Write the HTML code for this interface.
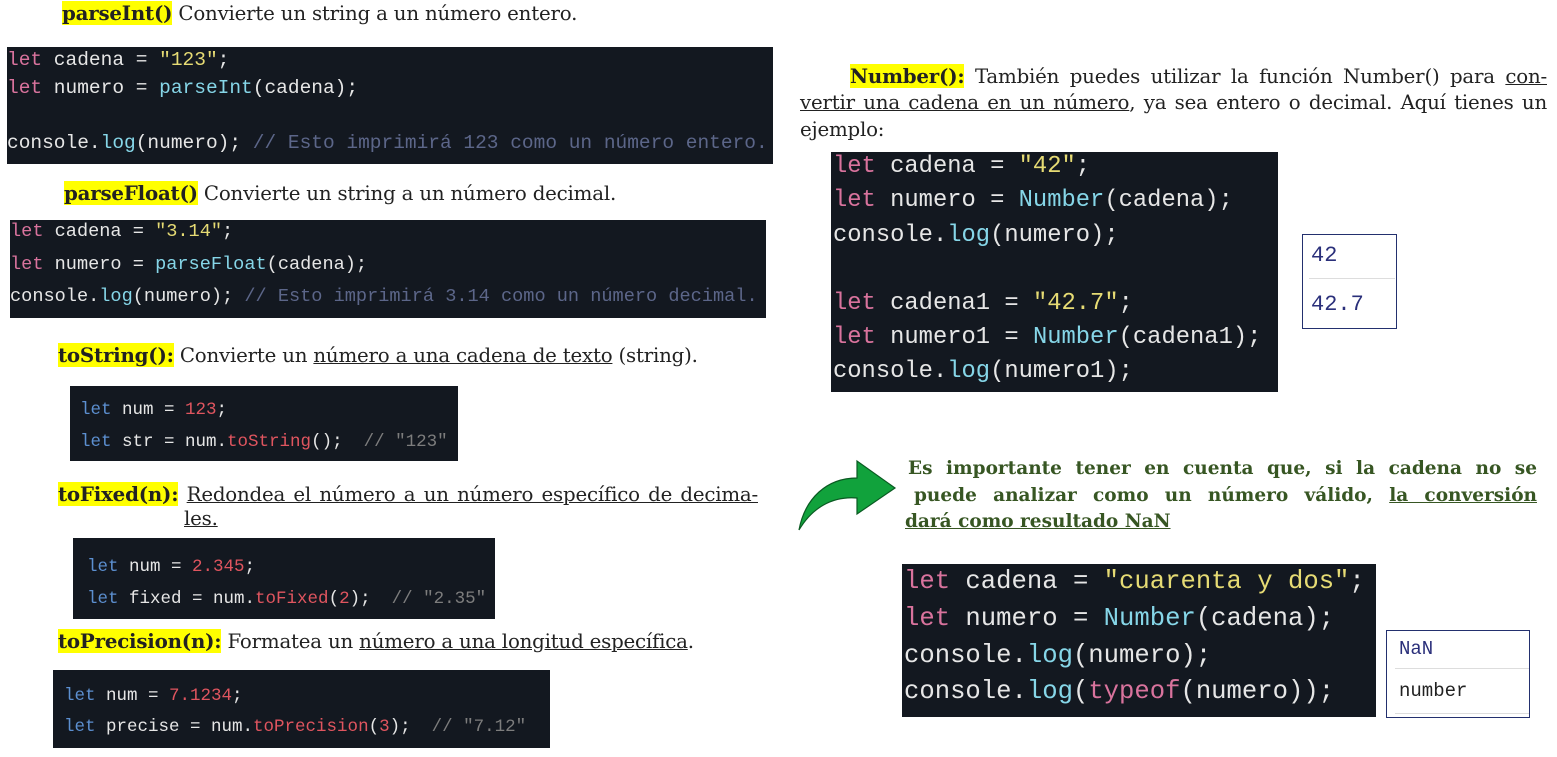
<!DOCTYPE html><html><head><meta charset="utf-8"><style>
body{margin:0;width:1557px;height:757px;background:#fff;position:relative;overflow:hidden;font-family:"DejaVu Serif","Liberation Serif",serif;color:#222}
.a{position:absolute;white-space:nowrap}
.t{font-size:19.8px;letter-spacing:-0.2px}
.hl{background:#ffff00;font-weight:bold}
.u{text-decoration:underline}
.j{text-align:justify;text-align-last:justify;white-space:normal}
.code{position:absolute;background:#131820;font-family:"Liberation Mono",monospace;color:#e6e6e6}
.code div{position:absolute;white-space:pre;left:0}
.k{color:#d9739d}.s{color:#e6db74}.f{color:#86d6e8}.c{color:#5c6689}
.k2{color:#5c8fd0}.n{color:#e0555f}.c2{color:#7d7d7d}
.box{position:absolute;border:1.5px solid #23306e;background:#fff;font-family:"Liberation Mono",monospace;color:#2a2f7a}
.g{font-weight:bold;color:#375623;font-size:18.5px}
</style></head><body>
<div class="a t" style="left:62px;top:1px"><span class="hl">parseInt()</span> Convierte un string a un número entero.</div>
<div class="code" style="left:7px;top:47px;width:766px;height:117px;font-size:19.5px">
<div style="top:2px"><span class="k">let</span> cadena = <span class="s">"123"</span>;</div>
<div style="top:30px"><span class="k">let</span> numero = <span class="f">parseInt</span>(cadena);</div>
<div style="top:85px">console.<span class="f">log</span>(numero); <span class="c">// Esto imprimirá 123 como un número entero.</span></div></div>
<div class="a t" style="left:64px;top:181px"><span class="hl">parseFloat()</span> Convierte un string a un número decimal.</div>
<div class="code" style="left:10px;top:220px;width:756px;height:98px;font-size:18.6px">
<div style="top:1px"><span class="k">let</span> cadena = <span class="s">"3.14"</span>;</div>
<div style="top:34px"><span class="k">let</span> numero = <span class="f">parseFloat</span>(cadena);</div>
<div style="top:66px">console.<span class="f">log</span>(numero); <span class="c">// Esto imprimirá 3.14 como un número decimal.</span></div></div>
<div class="a t" style="left:58px;top:343px"><span class="hl">toString():</span> Convierte un <span class="u">número a una cadena de texto</span> (string).</div>
<div class="code" style="left:70px;top:386px;width:388px;height:75px;font-size:17.5px">
<div style="top:14px;left:10px"><span class="k2">let</span> num = <span class="n">123</span>;</div>
<div style="top:46px;left:10px"><span class="k2">let</span> str = num.<span class="n">toString</span>();  <span class="c2">// "123"</span></div></div>
<div class="a t j" style="left:58px;top:482px;width:700px"><span class="hl">toFixed(n):</span> <span class="u">Redondea el número a un número específico de decima-</span></div>
<div class="a t u" style="left:184px;top:507px">les.</div>
<div class="code" style="left:73px;top:538px;width:422px;height:81px;font-size:17.5px">
<div style="top:19px;left:14px"><span class="k2">let</span> num = <span class="n">2.345</span>;</div>
<div style="top:51px;left:14px"><span class="k2">let</span> fixed = num.<span class="n">toFixed</span>(<span class="n">2</span>);  <span class="c2">// "2.35"</span></div></div>
<div class="a t" style="left:58px;top:629px"><span class="hl">toPrecision(n):</span> Formatea un <span class="u">número a una longitud específica</span>.</div>
<div class="code" style="left:53px;top:670px;width:497px;height:78px;font-size:17.5px">
<div style="top:16px;left:11px"><span class="k2">let</span> num = <span class="n">7.1234</span>;</div>
<div style="top:47px;left:11px"><span class="k2">let</span> precise = num.<span class="n">toPrecision</span>(<span class="n">3</span>);  <span class="c2">// "7.12"</span></div></div>

<div class="a t j" style="left:850px;top:64px;width:697px"><span class="hl">Number():</span> También puedes utilizar la función Number() para <span class="u">con-</span></div>
<div class="a t j" style="left:800px;top:91px;width:747px"><span class="u">vertir una cadena en un número</span>, ya sea entero o decimal. Aquí tienes un</div>
<div class="a t" style="left:800px;top:118px">ejemplo:</div>
<div class="code" style="left:831px;top:152px;width:447px;height:240px;font-size:23.8px">
<div style="top:1px;left:2px"><span class="k">let</span> cadena = <span class="s">"42"</span>;</div>
<div style="top:35px;left:2px"><span class="k">let</span> numero = <span class="f">Number</span>(cadena);</div>
<div style="top:70px;left:2px">console.<span class="f">log</span>(numero);</div>
<div style="top:138px;left:2px"><span class="k">let</span> cadena1 = <span class="s">"42.7"</span>;</div>
<div style="top:172px;left:2px"><span class="k">let</span> numero1 = <span class="f">Number</span>(cadena1);</div>
<div style="top:206px;left:2px">console.<span class="f">log</span>(numero1);</div></div>
<div class="box" style="left:1302px;top:234px;width:93px;height:93px;font-size:22px">
<div class="a" style="left:8px;top:8px">42</div>
<div class="a" style="left:6px;top:43px;width:86px;border-top:1px solid #ddd"></div>
<div class="a" style="left:8px;top:57px">42.7</div></div>

<svg class="a" style="left:797px;top:458px" width="100" height="76" viewBox="0 0 100 76"><path d="M2 72 C8 40 30 20 60 20 L60 3 L98 30 L60 56 L60 40 C35 38 15 50 2 72Z" fill="#11a23c" stroke="#0a5a22" stroke-width="1.2"/></svg>
<div class="a g j" style="left:908px;top:458px;width:629px">Es importante tener en cuenta que, si la cadena no se</div>
<div class="a g j" style="left:914px;top:485px;width:623px">puede analizar como un número válido, <span class="u">la conversión</span></div>
<div class="a g u" style="left:905px;top:511px">dará como resultado NaN</div>
<div class="code" style="left:902px;top:564px;width:474px;height:153px;font-size:25.6px">
<div style="top:3px;left:2px"><span class="k">let</span> cadena = <span class="s">"cuarenta y dos"</span>;</div>
<div style="top:40px;left:2px"><span class="k">let</span> numero = <span class="f">Number</span>(cadena);</div>
<div style="top:77px;left:2px">console.<span class="f">log</span>(numero);</div>
<div style="top:113px;left:2px">console.<span class="f">log</span>(<span class="k">typeof</span>(numero));</div></div>
<div class="box" style="left:1386px;top:630px;width:142px;height:86px;font-size:19px">
<div class="a" style="left:12px;top:7px">NaN</div>
<div class="a" style="left:8px;top:37px;width:134px;border-top:1px solid #ddd"></div>
<div class="a" style="left:12px;top:49px;color:#222">number</div>
<div class="a" style="left:8px;top:82px;width:134px;border-top:1px solid #ddd"></div></div>
</body></html>
